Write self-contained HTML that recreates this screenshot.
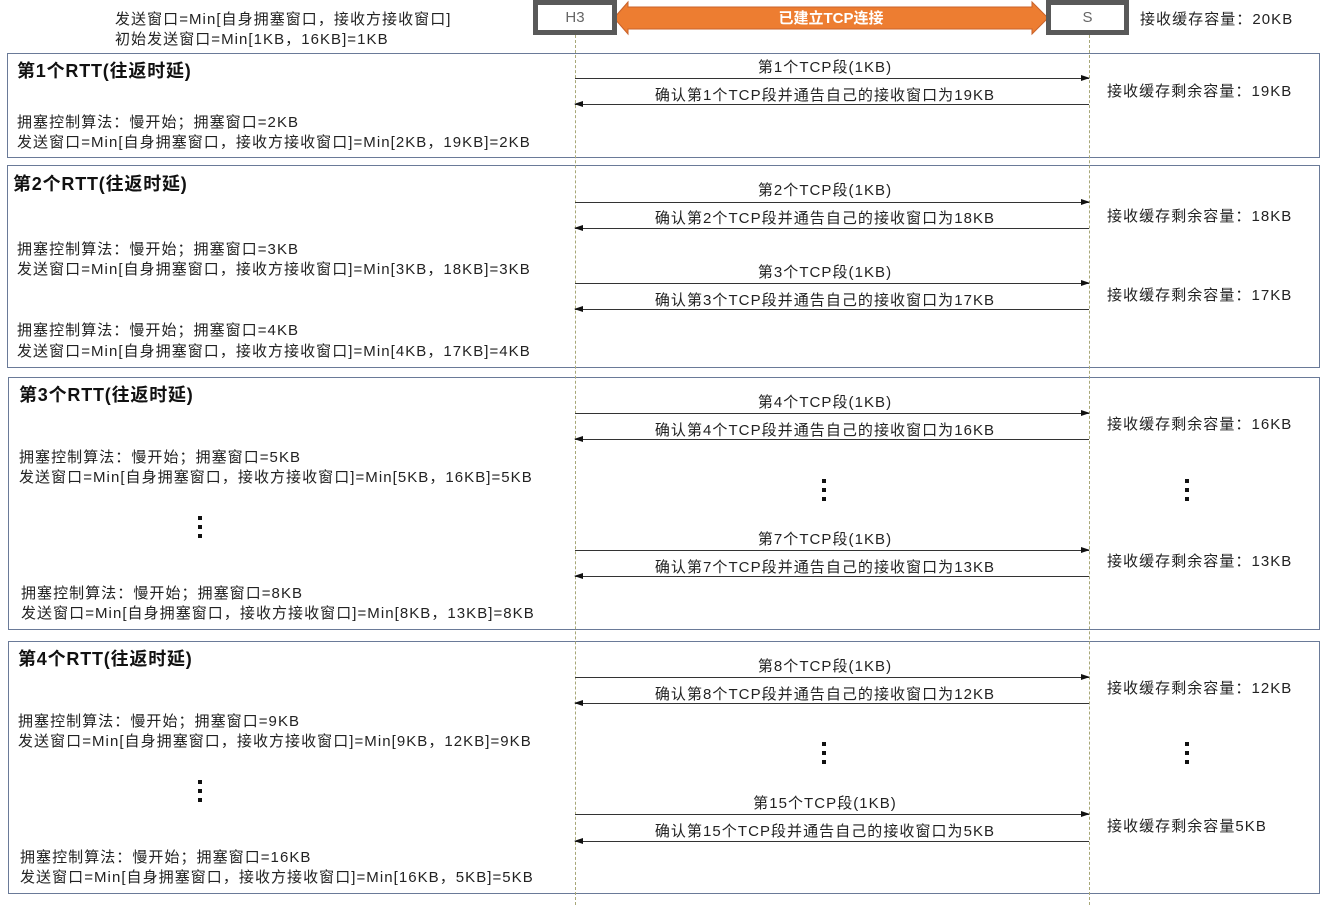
<!DOCTYPE html>
<html><head><meta charset="utf-8"><style>
body{margin:0;width:1320px;height:905px;background:#fff;position:relative;overflow:hidden;font-family:"Liberation Sans","Noto Sans CJK SC",sans-serif;color:#222}
.t{position:absolute;white-space:nowrap;font-size:15px;line-height:20px;letter-spacing:1.05px;margin-top:2px}
.b{font-weight:bold;font-size:18px;color:#111;letter-spacing:0.8px;margin-top:0}
.c{left:568px;width:514px;text-align:center}
.box{position:absolute;border:1px solid #6a7a98;box-sizing:border-box}
.life{position:absolute;top:35px;bottom:0;border-left:1px dashed #a8a878;width:0}
.ln{position:absolute;left:575px;width:514px;height:0;border-top:1px solid #333}
.ln.f::after{content:"";position:absolute;right:-1px;top:-4px;border-left:9px solid #111;border-top:3.5px solid transparent;border-bottom:3.5px solid transparent}
.ln.r::after{content:"";position:absolute;left:-1px;top:-4px;border-right:9px solid #111;border-top:3.5px solid transparent;border-bottom:3.5px solid transparent}
.dots{position:absolute;width:4px;height:24px}
.dots i{position:absolute;left:0;width:4px;height:4px;background:#111}
.node{position:absolute;top:0;height:35px;border:5px solid #595959;box-sizing:border-box;background:#fff;color:#666;font-size:15px;text-align:center;line-height:25px}
</style></head><body>
<div class="t" style="left:115px;top:8px">发送窗口=Min[自身拥塞窗口，接收方接收窗口]</div>
<div class="t" style="left:115px;top:28px">初始发送窗口=Min[1KB，16KB]=1KB</div>
<div class="t" style="left:1140px;top:8px">接收缓存容量：20KB</div>

<div class="box" style="left:7px;top:53px;width:1313px;height:105px"></div>
<div class="box" style="left:7px;top:165px;width:1313px;height:203px"></div>
<div class="box" style="left:8px;top:377px;width:1312px;height:253px"></div>
<div class="box" style="left:8px;top:641px;width:1312px;height:253px"></div>

<div class="life" style="left:575px"></div>
<div class="life" style="left:1089px"></div>

<svg style="position:absolute;left:612px;top:0" width="438" height="36"><polygon points="2,18 16,2 16,7 420,7 420,2 436,18 420,34 420,29 16,29 16,34" fill="#ed7d31" stroke="#c9622a" stroke-width="1"/><text x="219" y="23" text-anchor="middle" fill="#fff" font-weight="bold" font-size="15" font-family="Liberation Sans,Noto Sans CJK SC,sans-serif">已建立TCP连接</text></svg>
<div class="node" style="left:533px;width:84px">H3</div>
<div class="node" style="left:1046px;width:83px">S</div>

<div class="t b" style="left:17px;top:61px">第1个RTT(往返时延)</div>
<div class="t" style="left:17px;top:111px">拥塞控制算法：慢开始；拥塞窗口=2KB</div>
<div class="t" style="left:17px;top:131px">发送窗口=Min[自身拥塞窗口，接收方接收窗口]=Min[2KB，19KB]=2KB</div>

<div class="t b" style="left:13px;top:174px">第2个RTT(往返时延)</div>
<div class="t" style="left:17px;top:238px">拥塞控制算法：慢开始；拥塞窗口=3KB</div>
<div class="t" style="left:17px;top:258px">发送窗口=Min[自身拥塞窗口，接收方接收窗口]=Min[3KB，18KB]=3KB</div>
<div class="t" style="left:17px;top:319px">拥塞控制算法：慢开始；拥塞窗口=4KB</div>
<div class="t" style="left:17px;top:340px">发送窗口=Min[自身拥塞窗口，接收方接收窗口]=Min[4KB，17KB]=4KB</div>

<div class="t b" style="left:19px;top:385px">第3个RTT(往返时延)</div>
<div class="t" style="left:19px;top:446px">拥塞控制算法：慢开始；拥塞窗口=5KB</div>
<div class="t" style="left:19px;top:466px">发送窗口=Min[自身拥塞窗口，接收方接收窗口]=Min[5KB，16KB]=5KB</div>
<div class="t" style="left:21px;top:582px">拥塞控制算法：慢开始；拥塞窗口=8KB</div>
<div class="t" style="left:21px;top:602px">发送窗口=Min[自身拥塞窗口，接收方接收窗口]=Min[8KB，13KB]=8KB</div>

<div class="t b" style="left:18px;top:649px">第4个RTT(往返时延)</div>
<div class="t" style="left:18px;top:710px">拥塞控制算法：慢开始；拥塞窗口=9KB</div>
<div class="t" style="left:18px;top:730px">发送窗口=Min[自身拥塞窗口，接收方接收窗口]=Min[9KB，12KB]=9KB</div>
<div class="t" style="left:20px;top:846px">拥塞控制算法：慢开始；拥塞窗口=16KB</div>
<div class="t" style="left:20px;top:866px">发送窗口=Min[自身拥塞窗口，接收方接收窗口]=Min[16KB，5KB]=5KB</div>

<div class="t c" style="top:56px">第1个TCP段(1KB)</div><div class="ln f" style="top:78px"></div>
<div class="t c" style="top:84px">确认第1个TCP段并通告自己的接收窗口为19KB</div><div class="ln r" style="top:104px"></div>
<div class="t c" style="top:179px">第2个TCP段(1KB)</div><div class="ln f" style="top:202px"></div>
<div class="t c" style="top:207px">确认第2个TCP段并通告自己的接收窗口为18KB</div><div class="ln r" style="top:228px"></div>
<div class="t c" style="top:261px">第3个TCP段(1KB)</div><div class="ln f" style="top:283px"></div>
<div class="t c" style="top:289px">确认第3个TCP段并通告自己的接收窗口为17KB</div><div class="ln r" style="top:309px"></div>
<div class="t c" style="top:391px">第4个TCP段(1KB)</div><div class="ln f" style="top:413px"></div>
<div class="t c" style="top:419px">确认第4个TCP段并通告自己的接收窗口为16KB</div><div class="ln r" style="top:439px"></div>
<div class="t c" style="top:528px">第7个TCP段(1KB)</div><div class="ln f" style="top:550px"></div>
<div class="t c" style="top:556px">确认第7个TCP段并通告自己的接收窗口为13KB</div><div class="ln r" style="top:576px"></div>
<div class="t c" style="top:655px">第8个TCP段(1KB)</div><div class="ln f" style="top:677px"></div>
<div class="t c" style="top:683px">确认第8个TCP段并通告自己的接收窗口为12KB</div><div class="ln r" style="top:703px"></div>
<div class="t c" style="top:792px">第15个TCP段(1KB)</div><div class="ln f" style="top:814px"></div>
<div class="t c" style="top:820px">确认第15个TCP段并通告自己的接收窗口为5KB</div><div class="ln r" style="top:841px"></div>

<div class="t" style="left:1107px;top:80px">接收缓存剩余容量：19KB</div>
<div class="t" style="left:1107px;top:205px">接收缓存剩余容量：18KB</div>
<div class="t" style="left:1107px;top:284px">接收缓存剩余容量：17KB</div>
<div class="t" style="left:1107px;top:413px">接收缓存剩余容量：16KB</div>
<div class="t" style="left:1107px;top:550px">接收缓存剩余容量：13KB</div>
<div class="t" style="left:1107px;top:677px">接收缓存剩余容量：12KB</div>
<div class="t" style="left:1107px;top:815px">接收缓存剩余容量5KB</div>

<div class="dots" style="left:822px;top:479px"><i style="top:0"></i><i style="top:9px"></i><i style="top:18px"></i></div>
<div class="dots" style="left:1185px;top:479px"><i style="top:0"></i><i style="top:9px"></i><i style="top:18px"></i></div>
<div class="dots" style="left:198px;top:516px"><i style="top:0"></i><i style="top:9px"></i><i style="top:18px"></i></div>
<div class="dots" style="left:822px;top:742px"><i style="top:0"></i><i style="top:9px"></i><i style="top:18px"></i></div>
<div class="dots" style="left:1185px;top:742px"><i style="top:0"></i><i style="top:9px"></i><i style="top:18px"></i></div>
<div class="dots" style="left:198px;top:780px"><i style="top:0"></i><i style="top:9px"></i><i style="top:18px"></i></div>
</body></html>
